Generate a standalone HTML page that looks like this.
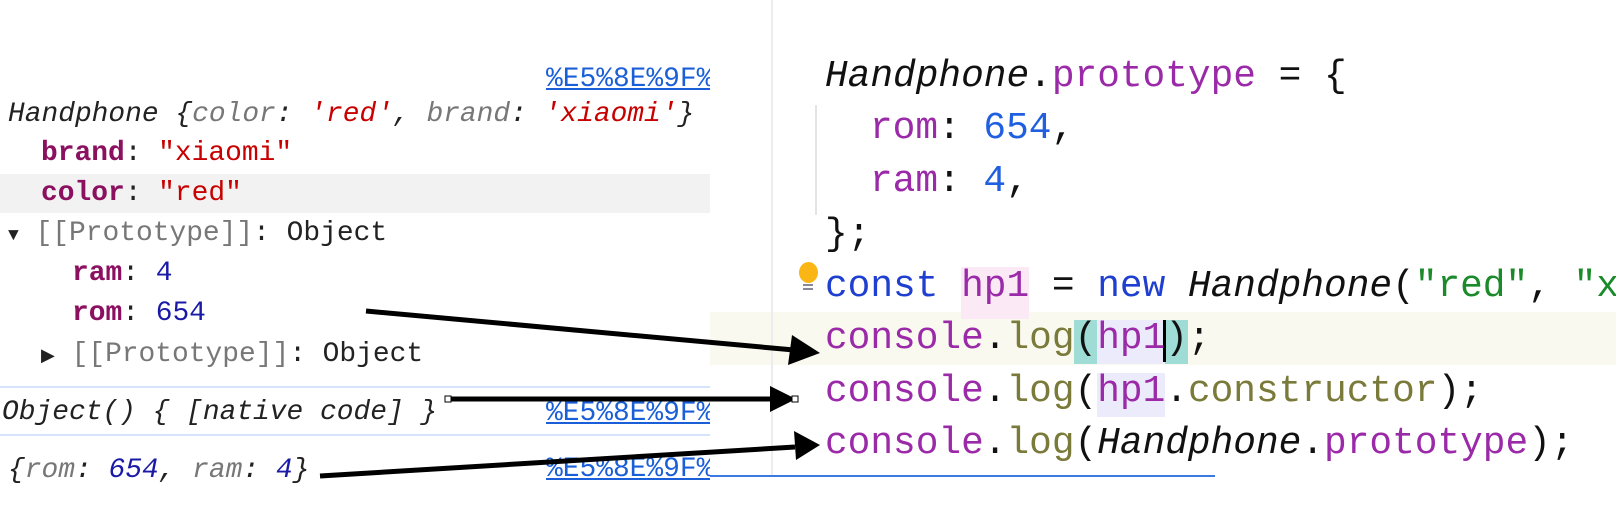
<!DOCTYPE html>
<html><head><meta charset="utf-8"><style>
html,body{margin:0;padding:0;width:1616px;height:522px;overflow:hidden;background:#fff;position:relative}
.c{position:absolute;font-family:"Liberation Mono",monospace;font-size:27.9px;line-height:40px;height:40px;white-space:pre;color:#222}
.e{position:absolute;font-family:"Liberation Mono",monospace;font-size:37.8px;line-height:52px;height:52px;white-space:pre;color:#111}
.k{color:#8b1060;font-weight:bold}.s{color:#c80000}.n{color:#1a1aa6}.g{color:#777}.i{font-style:italic}
.lk{color:#1a5fd8;text-decoration:underline}
.pp{color:#9b2aa8}.num{color:#1f5fe0}.kw{color:#1f3fd0}.str{color:#1a8a2a}.fn{color:#7a7a3a}
</style></head><body>
<div style="position:absolute;left:0;top:174px;width:710px;height:39px;background:#f2f2f2"></div>
<div style="position:absolute;left:0;top:386px;width:710px;height:2px;background:#d6e4fb"></div>
<div style="position:absolute;left:0;top:434px;width:710px;height:2px;background:#d6e4fb"></div>
<div style="position:absolute;left:710px;top:312px;width:906px;height:53px;background:#f9f9ef"></div>
<div style="position:absolute;left:771px;top:0;width:2px;height:476px;background:#ececec"></div>
<div style="position:absolute;left:815px;top:105px;width:2px;height:110px;background:#e4e4e4"></div>
<div style="position:absolute;left:710px;top:475px;width:505px;height:2px;background:#3b78e0"></div>
<div style="position:absolute;left:961px;top:267px;width:68px;height:52px;background:#fbe9f6"></div>
<div style="position:absolute;left:1074px;top:320px;width:23px;height:44px;background:#9fdcd6"></div>
<div style="position:absolute;left:1165px;top:320px;width:23px;height:44px;background:#9fdcd6"></div>
<div style="position:absolute;left:1097px;top:320px;width:68px;height:44px;background:#ecebfb"></div>
<div style="position:absolute;left:1097px;top:373px;width:68px;height:44px;background:#ecebfb"></div>
<div style="position:absolute;left:1163px;top:320px;width:3px;height:42px;background:#000"></div>

<div style="position:absolute;left:0;top:0;width:710px;height:522px;overflow:hidden">
<div class="c" style="left:546px;top:60px"><span class="lk">%E5%8E%9F%</span></div>
<div class="c i" style="left:8px;top:95px">Handphone {<span class="g">color</span>: <span class="s">'red'</span>, <span class="g">brand</span>: <span class="s">'xiaomi'</span>}</div>
<div class="c" style="left:41px;top:134px"><span class="k">brand</span>: <span class="s">"xiaomi"</span></div>
<div class="c" style="left:41px;top:174px"><span class="k">color</span>: <span class="s">"red"</span></div>
<div class="c" style="left:8px;top:214px"><span style="font-size:18px">▼</span> <span class="g">[[Prototype]]</span>: Object</div>
<div class="c" style="left:72px;top:254px"><span class="k">ram</span>: <span class="n">4</span></div>
<div class="c" style="left:72px;top:294px"><span class="k">rom</span>: <span class="n">654</span></div>
<div class="c" style="left:41px;top:335px"><span style="font-size:18px">▶</span> <span class="g">[[Prototype]]</span>: Object</div>
<div class="c i" style="left:2px;top:393px">Object() { [native code] }</div>
<div class="c" style="left:546px;top:394px"><span class="lk">%E5%8E%9F%</span></div>
<div class="c i" style="left:8px;top:451px">{<span class="g">rom</span>: <span class="n">654</span>, <span class="g">ram</span>: <span class="n">4</span>}</div>
<div class="c" style="left:546px;top:450px"><span class="lk">%E5%8E%9F%</span></div>
</div>

<div class="e" style="left:825px;top:51px"><span class="i">Handphone</span>.<span class="pp">prototype</span> = {</div>
<div class="e" style="left:870px;top:103px"><span class="pp">rom</span>: <span class="num">654</span>,</div>
<div class="e" style="left:870px;top:156px"><span class="pp">ram</span>: <span class="num">4</span>,</div>
<div class="e" style="left:825px;top:209px">};</div>
<div style="position:absolute;left:799px;top:262px;width:19px;height:21px;border-radius:50%;background:#f9b614"></div>
<div style="position:absolute;left:803px;top:284px;width:10px;height:2px;background:#889;box-shadow:0 4px 0 #889"></div>
<div class="e" style="left:825px;top:261px"><span class="kw">const</span> <span class="pp">hp1</span> = <span class="kw">new</span> <span class="i">Handphone</span>(<span class="str">"red"</span>, <span class="str">"x</span></div>
<div class="e" style="left:825px;top:313px"><span class="pp">console</span>.<span class="fn">log</span>(<span class="pp">hp1</span>);</div>
<div class="e" style="left:825px;top:366px"><span class="pp">console</span>.<span class="fn">log</span>(<span class="pp">hp1</span>.<span class="fn">constructor</span>);</div>
<div class="e" style="left:825px;top:418px"><span class="pp">console</span>.<span class="fn">log</span>(<span class="i">Handphone</span>.<span class="pp">prototype</span>);</div>

<svg style="position:absolute;left:0;top:0" width="1616" height="522">
<g stroke="#000" stroke-width="5" fill="#000">
<line x1="366" y1="311" x2="794" y2="350"/>
<polygon points="820,353 792,335 788,365" stroke="none"/>
<line x1="450" y1="399" x2="772" y2="399"/>
<polygon points="796,399 770,386 770,412" stroke="none"/>
<line x1="320" y1="476" x2="795" y2="447"/>
<polygon points="820,445 794,431 796,460" stroke="none"/>
</g>
<rect x="445" y="396" width="6" height="6" fill="#fff" stroke="#000" stroke-width="1"/>
<rect x="792" y="396" width="6" height="6" fill="#fff" stroke="#000" stroke-width="1"/>
</svg>
</body></html>
